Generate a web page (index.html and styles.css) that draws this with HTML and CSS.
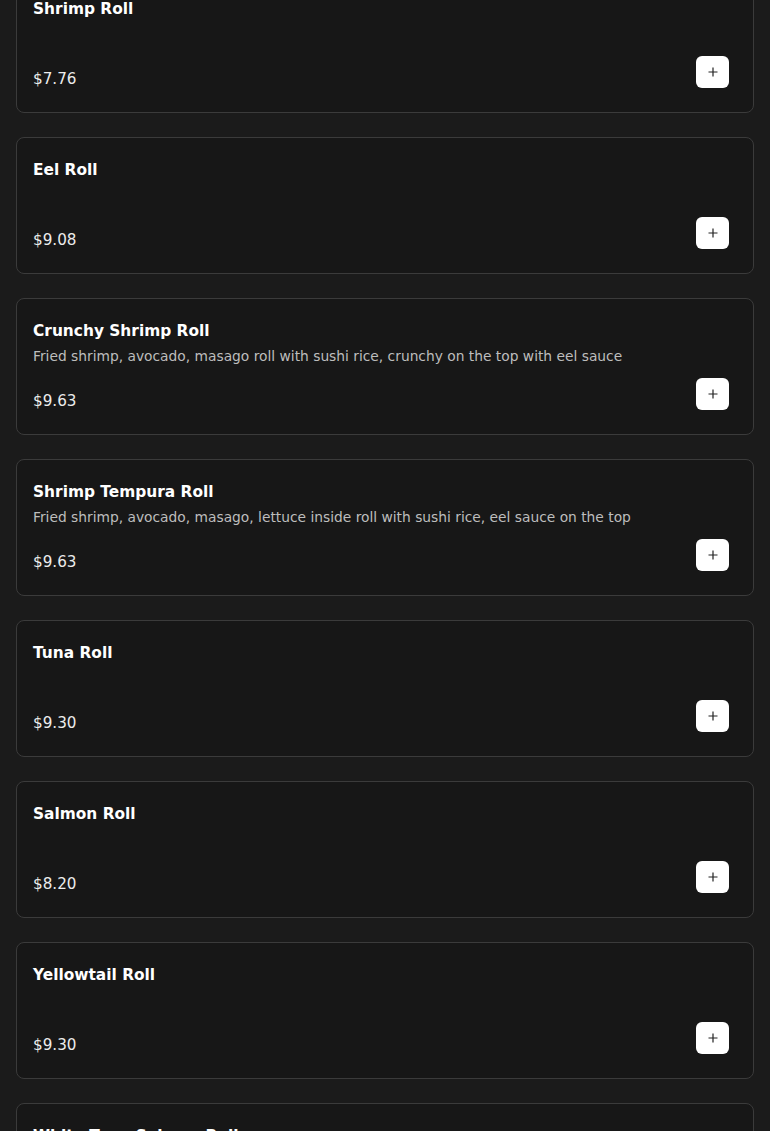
FILE: index.html
```html
<!DOCTYPE html>
<html lang="en">
<head>
    <meta charset="UTF-8">
    <meta name="viewport" content="width=device-width, initial-scale=1.0">
    <title>Rolls</title>
    <link rel="stylesheet" href="styles.css">
</head>
<body>
    <div class="menu">
        <div class="item">
            <div class="name">Shrimp Roll</div>
            <div class="desc"></div>
            <div class="bottom"><span class="price">$7.76</span><button class="add"><svg viewBox="0 0 12 12"><path d="M6 1.5v9M1.5 6h9"/></svg></button></div>
        </div>
        <div class="item">
            <div class="name">Eel Roll</div>
            <div class="desc"></div>
            <div class="bottom"><span class="price">$9.08</span><button class="add"><svg viewBox="0 0 12 12"><path d="M6 1.5v9M1.5 6h9"/></svg></button></div>
        </div>
        <div class="item">
            <div class="name">Crunchy Shrimp Roll</div>
            <div class="desc">Fried shrimp, avocado, masago roll with sushi rice, crunchy on the top with eel sauce</div>
            <div class="bottom"><span class="price">$9.63</span><button class="add"><svg viewBox="0 0 12 12"><path d="M6 1.5v9M1.5 6h9"/></svg></button></div>
        </div>
        <div class="item">
            <div class="name">Shrimp Tempura Roll</div>
            <div class="desc">Fried shrimp, avocado, masago, lettuce inside roll with sushi rice, eel sauce on the top</div>
            <div class="bottom"><span class="price">$9.63</span><button class="add"><svg viewBox="0 0 12 12"><path d="M6 1.5v9M1.5 6h9"/></svg></button></div>
        </div>
        <div class="item">
            <div class="name">Tuna Roll</div>
            <div class="desc"></div>
            <div class="bottom"><span class="price">$9.30</span><button class="add"><svg viewBox="0 0 12 12"><path d="M6 1.5v9M1.5 6h9"/></svg></button></div>
        </div>
        <div class="item">
            <div class="name">Salmon Roll</div>
            <div class="desc"></div>
            <div class="bottom"><span class="price">$8.20</span><button class="add"><svg viewBox="0 0 12 12"><path d="M6 1.5v9M1.5 6h9"/></svg></button></div>
        </div>
        <div class="item">
            <div class="name">Yellowtail Roll</div>
            <div class="desc"></div>
            <div class="bottom"><span class="price">$9.30</span><button class="add"><svg viewBox="0 0 12 12"><path d="M6 1.5v9M1.5 6h9"/></svg></button></div>
        </div>
        <div class="item">
            <div class="name">White Tuna Salmon Roll</div>
            <div class="desc"></div>
            <div class="bottom"><span class="price">$9.30</span><button class="add"><svg viewBox="0 0 12 12"><path d="M6 1.5v9M1.5 6h9"/></svg></button></div>
        </div>
    </div>
</body>
</html>
```

FILE: styles.css
```css
body { margin: 0; background-color: #1b1b1b; font-family: "DejaVu Sans", sans-serif; color: #fff; overflow: hidden; }
.menu { display: flex; flex-direction: column; gap: 24px; padding: 0 16px; margin-top: -24px; }
.item { background-color: #171717; border: 1px solid #3b3b3b; border-radius: 8px; padding: 17px 24px 24px 16px; }
.name { font-size: 15.4px; font-weight: bold; line-height: 30px; color: #fff; }
.desc { font-size: 13.8px; line-height: 20px; min-height: 20px; color: #bdbdbd; }
.bottom { display: flex; justify-content: space-between; align-items: flex-end; margin-top: 12px; }
.price { font-size: 15.2px; line-height: 18px; color: #ececec; }
.add { width: 33px; height: 32px; border: none; border-radius: 6px; background-color: #fff; padding: 0; display: flex; align-items: center; justify-content: center; cursor: pointer; }
.add svg { width: 12px; height: 12px; fill: none; stroke: #222; stroke-width: 1.2; }
```
